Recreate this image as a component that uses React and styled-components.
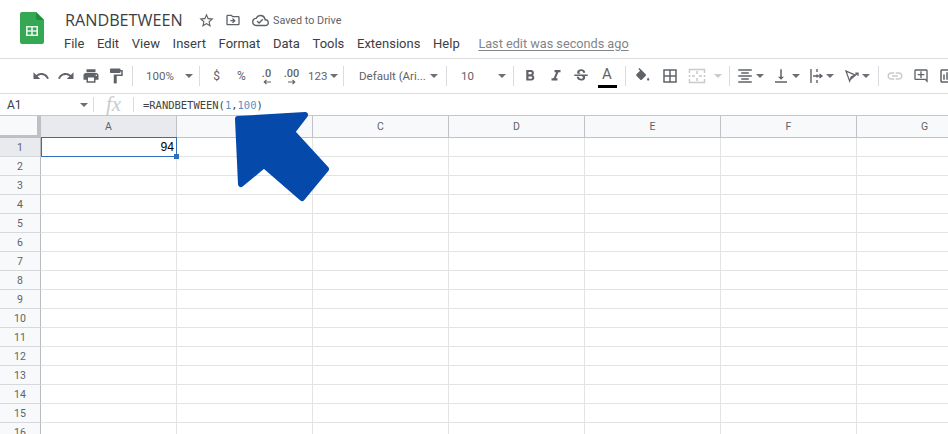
import React from "react";
import styled, { createGlobalStyle } from "styled-components";
import {
  MdUndo, MdRedo, MdPrint, MdFormatPaint, MdFormatBold, MdFormatItalic, MdStrikethroughS,
  MdBorderAll, MdFormatAlignCenter, MdVerticalAlignBottom, MdLink, MdOutlineAddComment,
  MdOutlineInsertChart, MdStarBorder, MdOutlineDriveFileMove, MdOutlineCloudDone,
} from "react-icons/md";

const Global = createGlobalStyle`
  html, body { margin: 0; padding: 0; background: #fff; }
  body { width: 948px; height: 434px; overflow: hidden; font-family: Roboto, "Liberation Sans", sans-serif; }
`;

const Page = styled.div`
  position: relative;
  width: 948px;
  height: 434px;
  overflow: hidden;
  display: flex;
  flex-direction: column;
`;

const Header = styled.header`
  height: 58px;
  box-sizing: border-box;
  flex: none;
  display: flex;
  padding: 12px 0 0 20px;
`;

const Logo = styled.svg`
  width: 24px;
  height: 32px;
  flex: none;
  margin-right: 20px;
`;

const TitleBlock = styled.div`
  display: flex;
  flex-direction: column;
`;

const TitleRow = styled.div`
  display: flex;
  align-items: center;
  height: 16px;
  margin-left: 1px;
  color: #5f6368;
`;

const Title = styled.div`
  font: 400 16.2px/16px "Open Sans", Roboto, sans-serif;
  color: #3c4043;
  width: 133px;
`;

const TitleIcon = styled.span`
  display: flex;
  width: ${(p) => p.$w}px;
  font-size: ${(p) => p.$size}px;
`;

const Saved = styled.span`
  font-size: 10.8px;
  color: #5f6368;
  margin-left: 3px;
`;

const MenuRow = styled.nav`
  display: flex;
  align-items: center;
  margin-top: 7px;
  height: 16px;
`;

const MenuItem = styled.span`
  font-size: 13px;
  color: #3c4043;
  margin-right: ${(p) => p.$gap}px;
`;

const LastEdit = styled.span`
  font-size: 12.7px;
  color: #80868b;
  text-decoration: underline;
  text-underline-offset: 2px;
  margin-left: 6px;
`;

const Toolbar = styled.div`
  height: 36px;
  flex: none;
  box-sizing: border-box;
  border-top: 1px solid #dadce0;
  border-bottom: 1px solid #dadce0;
  display: flex;
  align-items: center;
  padding-left: 28px;
  color: #5f6368;
`;

const Slot = styled.div`
  flex: none;
  width: ${(p) => p.$w}px;
  height: 100%;
  box-sizing: border-box;
  padding-left: ${(p) => p.$pad || 0}px;
  display: flex;
  align-items: center;
  justify-content: ${(p) => (p.$start ? "flex-start" : "center")};
  font-size: ${(p) => p.$size || 18}px;
  color: ${(p) => p.$color || "#5f6368"};
`;

const Sep = styled.div`
  flex: none;
  width: 8px;
  height: 100%;
  display: flex;
  justify-content: center;
  align-items: center;
  &::before {
    content: "";
    width: 1px;
    height: 20px;
    background: #dadce0;
  }
`;

const Caret = styled.span`
  flex: none;
  width: 0;
  height: 0;
  border-left: 4px solid transparent;
  border-right: 4px solid transparent;
  border-top: 4px solid ${(p) => p.$color || "#6b6f74"};
  margin-left: ${(p) => p.$left}px;
`;

const ToolText = styled.span`
  font-size: ${(p) => p.$size || 11.5}px;
  color: #5f6368;
  width: ${(p) => (p.$w ? `${p.$w}px` : "auto")};
  white-space: nowrap;
`;

const DecimalWrap = styled.span`
  display: flex;
  flex-direction: column;
  align-items: center;
  font-size: 11px;
  font-weight: 500;
  line-height: 10px;
  color: #5f6368;
  margin-top: 1px;
`;

const ColorWrap = styled.span`
  display: flex;
  flex-direction: column;
  align-items: center;
  font-size: 15px;
  line-height: 15px;
  color: #5f6368;
  margin-top: 2px;
`;

const ColorBar = styled.span`
  width: 19px;
  height: 3px;
  margin-top: 3px;
  background: #000;
`;

const FormulaBar = styled.div`
  height: 21px;
  flex: none;
  display: flex;
  align-items: center;
`;

const NameBox = styled.div`
  width: 93px;
  box-sizing: border-box;
  padding: 0 5px 0 7px;
  display: flex;
  justify-content: space-between;
  align-items: center;
  font-size: 12px;
  color: #3c4043;
`;

const BarSep = styled.span`
  width: 1px;
  height: 15px;
  background: #dadce0;
  flex: none;
`;

const Fx = styled.span`
  width: 39px;
  text-align: center;
  font: italic 21px/21px "Liberation Serif", serif;
  color: #c9cbcd;
`;

const Formula = styled.div`
  margin-left: 9px;
  font: 10.5px "DejaVu Sans Mono", monospace;
  letter-spacing: -0.02px;
  color: #444;
`;

const Num = styled.span`
  color: #5a8fc8;
`;

const Sheet = styled.div`
  flex: none;
  display: grid;
  grid-template-columns: 41px repeat(7, 136px);
  grid-template-rows: 22px repeat(16, 19px);
  border-top: 1px solid #c4c7c5;
`;

const Corner = styled.div`
  box-sizing: border-box;
  background: #f8f9fa;
  border-right: 4px solid #bdc1c6;
  border-bottom: 3px solid #bdc1c6;
`;

const ColHead = styled.div`
  box-sizing: border-box;
  background: ${(p) => (p.$active ? "#e8eaed" : "#f8f9fa")};
  border-right: 1px solid #c0c4c9;
  border-bottom: 1px solid #c0c4c9;
  display: flex;
  align-items: center;
  justify-content: center;
  font-size: 10.5px;
  color: #5f6368;
`;

const RowHead = styled.div`
  box-sizing: border-box;
  background: ${(p) => (p.$active ? "#e8eaed" : "#f8f9fa")};
  border-right: 1px solid #b8bcc1;
  border-bottom: 1px solid #d5d8dc;
  display: flex;
  align-items: center;
  justify-content: center;
  font-size: 10.5px;
  color: #5f6368;
`;

const Cell = styled.div`
  position: relative;
  box-sizing: border-box;
  border-right: 1px solid #e2e3e3;
  border-bottom: 1px solid #e2e3e3;
  font: 12.2px/19px "Liberation Sans", Arial, sans-serif;
  color: #000;
  text-align: right;
  padding-right: 2px;
`;

const Selection = styled.div`
  position: absolute;
  z-index: 2;
  left: 0;
  top: -1px;
  right: -1px;
  bottom: -1px;
  border: 1px solid #2f6fbd;
  pointer-events: none;
`;

const Handle = styled.div`
  position: absolute;
  right: -3px;
  bottom: -3px;
  width: 5px;
  height: 5px;
  background: #2f6fbd;
`;

const Arrow = styled.svg`
  position: absolute;
  left: 230px;
  top: 106px;
  width: 105px;
  height: 100px;
`;

const menu = ["File", "Edit", "View", "Insert", "Format", "Data", "Tools", "Extensions", "Help"];
const cols = ["A", "B", "C", "D", "E", "F", "G"];
const rows = Array.from({ length: 16 }, (_, i) => i + 1);

function ArrowLine({ dir }) {
  return (
    <svg width="8" height="6" viewBox="0 0 8 6">
      <path d={dir === "left" ? "M8 3H2M3.5 .8L1.3 3l2.2 2.2" : "M0 3h6M4.5 .8L6.7 3 4.5 5.2"} stroke="#5f6368" strokeWidth="1.2" fill="none" />
    </svg>
  );
}

function Merge() {
  return (
    <svg width="18" height="18" viewBox="0 0 18 18" fill="none" stroke="#c8cacc" strokeWidth="1.5">
      <path d="M1.5 6V2.5h15V6M1.5 12v3.5h15V12M1.5 8v2M16.5 8v2M9 4v3M9 11v3M4 9h3M11 9h3" />
    </svg>
  );
}

function Wrap() {
  return (
    <svg width="14" height="14" viewBox="0 0 14 14" fill="none" stroke="#5f6368" strokeWidth="1.4">
      <path d="M1 0v14M7 0v3M7 5.5v3M7 11v3M3 7h8M9.5 5L12 7l-2.5 2" />
    </svg>
  );
}

function Rotate() {
  return (
    <svg width="14" height="13" viewBox="0 0 15 14" fill="none" stroke="#5f6368" strokeWidth="1.3">
      <path d="M1 1l4 11 1.6-4.5L11 5.5 1 1zM6 10l7-6M11 3.4h3V6.4" />
    </svg>
  );
}

function Fill() {
  return (
    <svg width="17" height="17" viewBox="0 0 24 24" fill="#5f6368">
      <path d="M16.56 8.94L7.62 0 6.21 1.41l2.38 2.38-5.15 5.15c-.59.59-.59 1.54 0 2.12l5.5 5.5c.29.29.68.44 1.06.44s.77-.15 1.06-.44l5.5-5.5c.59-.58.59-1.53 0-2.12z" />
      <path d="M20 13.5s-1.6 1.7-1.6 2.8c0 .9.7 1.6 1.6 1.6s1.6-.7 1.6-1.6c0-1.1-1.6-2.8-1.6-2.8z" />
    </svg>
  );
}

export default function App() {
  return (
    <Page>
      <Global />
      <Header>
        <Logo viewBox="0 0 24 32">
          <path d="M2 0h14l8 8v22a2 2 0 0 1-2 2H2a2 2 0 0 1-2-2V2a2 2 0 0 1 2-2z" fill="#34a853" />
          <path d="M16 0l8 8h-6a2 2 0 0 1-2-2z" fill="#1e8e3e" />
          <path d="M6 14h12v10H6z M7.6 15.6v2.6h3.6v-2.6z M12.8 15.6v2.6h3.6v-2.6z M7.6 19.8v2.6h3.6v-2.6z M12.8 19.8v2.6h3.6v-2.6z" fill="#e6f4ea" fillRule="evenodd" />
        </Logo>
        <TitleBlock>
          <TitleRow>
            <Title>RANDBETWEEN</Title>
            <TitleIcon $w={27} $size={17}><MdStarBorder /></TitleIcon>
            <TitleIcon $w={27} $size={16}><MdOutlineDriveFileMove /></TitleIcon>
            <TitleIcon $w={18} $size={17}><MdOutlineCloudDone /></TitleIcon>
            <Saved>Saved to Drive</Saved>
          </TitleRow>
          <MenuRow>
            {menu.map((m) => <MenuItem key={m} $gap={12.7}>{m}</MenuItem>)}
            <LastEdit>Last edit was seconds ago</LastEdit>
          </MenuRow>
        </TitleBlock>
      </Header>

      <Toolbar>
        <Slot $w={25}><MdUndo /></Slot>
        <Slot $w={25}><MdRedo /></Slot>
        <Slot $w={25}><MdPrint /></Slot>
        <Slot $w={25}><MdFormatPaint /></Slot>
        <Sep />
        <Slot $w={59} $start $pad={10}><ToolText $w={36}>100%</ToolText><Caret $left={3} /></Slot>
        <Sep />
        <Slot $w={1} />
        <Slot $w={25}><ToolText $size={12}>$</ToolText></Slot>
        <Slot $w={25}><ToolText $size={12}>%</ToolText></Slot>
        <Slot $w={25}><DecimalWrap>.0<ArrowLine dir="left" /></DecimalWrap></Slot>
        <Slot $w={25}><DecimalWrap>.00<ArrowLine dir="right" /></DecimalWrap></Slot>
        <Slot $w={35} $start $pad={4}><ToolText>123</ToolText><Caret $left={3} /></Slot>
        <Sep />
        <Slot $w={95} $start $pad={12}><ToolText $w={71}>Default (Ari...</ToolText><Caret $left={0} /></Slot>
        <Sep />
        <Slot $w={59} $start $pad={11}><ToolText $w={37}>10</ToolText><Caret $left={0} /></Slot>
        <Sep />
        <Slot $w={26}><MdFormatBold /></Slot>
        <Slot $w={25}><MdFormatItalic /></Slot>
        <Slot $w={25}><MdStrikethroughS /></Slot>
        <Slot $w={28}><ColorWrap>A<ColorBar /></ColorWrap></Slot>
        <Sep />
        <Slot $w={26}><Fill /></Slot>
        <Slot $w={2} />
        <Slot $w={26}><MdBorderAll /></Slot>
        <Slot $w={1} />
        <Slot $w={41} $start $pad={4}><Merge /><Caret $left={8} $color="#c8cacc" /></Slot>
        <Sep />
        <Slot $w={35} $start $pad={3}><MdFormatAlignCenter /><Caret $left={2} /></Slot>
        <Slot $w={36} $start $pad={4}><MdVerticalAlignBottom /><Caret $left={2} /></Slot>
        <Slot $w={35} $start $pad={6}><Wrap /><Caret $left={2} /></Slot>
        <Slot $w={35} $start $pad={6}><Rotate /><Caret $left={3} /></Slot>
        <Sep />
        <Slot $w={26} $color="#c8cacc"><MdLink /></Slot>
        <Slot $w={26} $size={16}><MdOutlineAddComment /></Slot>
        <Slot $w={26}><MdOutlineInsertChart /></Slot>
      </Toolbar>

      <FormulaBar>
        <NameBox>A1<Caret $left={0} /></NameBox>
        <BarSep />
        <Fx>fx</Fx>
        <BarSep />
        <Formula>=RANDBETWEEN(<Num>1</Num>,<Num>100</Num>)</Formula>
      </FormulaBar>

      <Sheet>
        <Corner />
        {cols.map((c) => <ColHead key={c} $active={c === "A"}>{c}</ColHead>)}
        {rows.map((r) => (
          <React.Fragment key={r}>
            <RowHead $active={r === 1}>{r}</RowHead>
            {cols.map((c) => (
              <Cell key={c}>
                {r === 1 && c === "A" && (
                  <>
                    94
                    <Selection><Handle /></Selection>
                  </>
                )}
              </Cell>
            ))}
          </React.Fragment>
        ))}
      </Sheet>

      <Arrow viewBox="230 106 105 100">
        <path
          d="M238 119 L305 115 L292 132 L326 169 L302 198 L264 165 L241 184 Z"
          fill="#0549ab"
          stroke="#0549ab"
          strokeWidth="6"
          strokeLinejoin="round"
        />
      </Arrow>
    </Page>
  );
}
